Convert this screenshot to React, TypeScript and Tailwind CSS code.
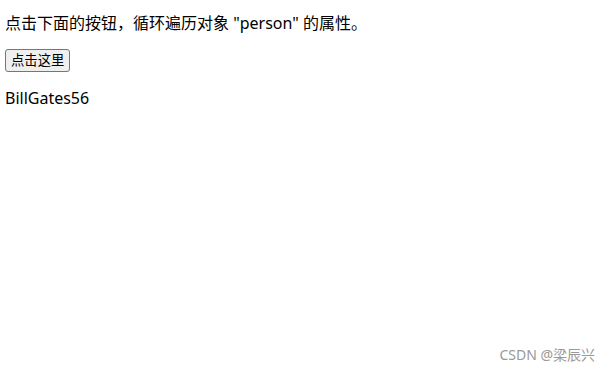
const FONT = "font-['Microsoft_YaHei','Noto_Sans','Noto_Sans_CJK_SC',sans-serif]";

export default function App() {
  return (
    <div className={`relative h-[373px] w-[611px] overflow-hidden bg-white text-black ${FONT}`}>
      <div className="flex flex-col items-start pl-[5px] pt-[13px] text-[16px] leading-[21px]">
        <p>点击下面的按钮，循环遍历对象 "person" 的属性。</p>
        <button
          type="button"
          className="mt-[15px] h-[23px] rounded-[3px] border border-[#767676] bg-[#efefef] px-[5px] text-[13.33px] leading-[19px] hover:bg-[#e5e5e5]"
        >
          点击这里
        </button>
        <p className="mt-[16px]">BillGates56</p>
      </div>
      <span className="absolute right-[16px] bottom-[9px] text-[14px] leading-[18px] text-[#999999]">
        CSDN @梁辰兴
      </span>
    </div>
  );
}
